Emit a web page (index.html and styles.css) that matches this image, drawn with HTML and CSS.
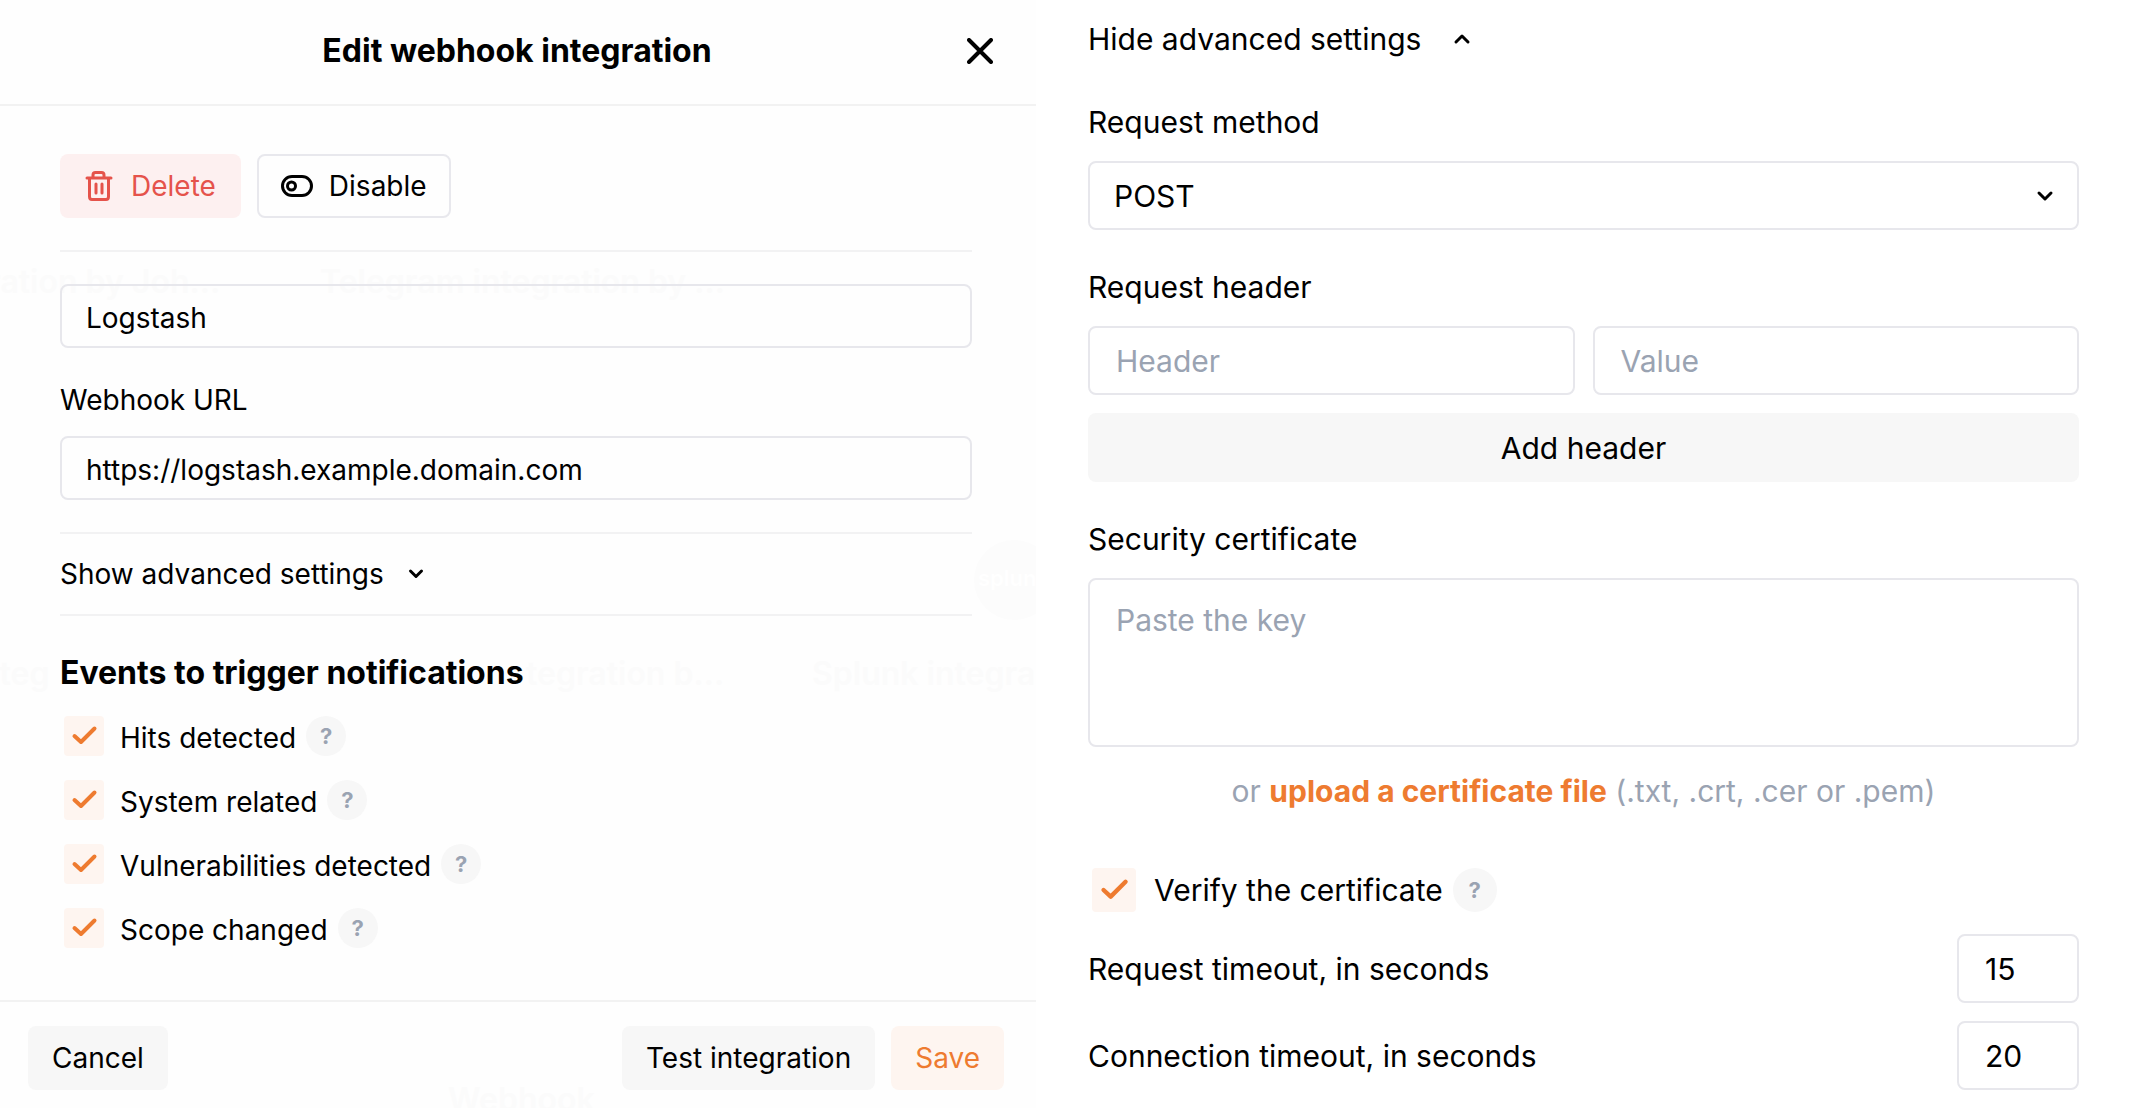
FILE: index.html
```html
<!DOCTYPE html>
<html lang="en">
<head>
<meta charset="utf-8">
<meta name="viewport" content="width=device-width, initial-scale=1">
<title>Edit webhook integration</title>
<link rel="stylesheet" href="styles.css">
</head>
<body>
<main class="page">
  <section class="dialog" aria-labelledby="dialog-title">
    <div class="backdrop" aria-hidden="true">
      <span class="ghost ghost-john">ration by Joh...</span>
      <span class="ghost ghost-telegram">Telegram integration by ...</span>
      <span class="ghost ghost-left">nteg</span>
      <span class="ghost ghost-mid">tegration b...</span>
      <span class="ghost ghost-splunk">Splunk integra</span>
      <span class="ghost ghost-webhook">Webhook</span>
      <span class="ghost-logo">splunk</span>
    </div>
    <header class="dialog-header">
      <h1 class="title" id="dialog-title">Edit webhook integration</h1>
      <button class="close" type="button" aria-label="Close">
        <svg width="26" height="26" viewBox="0 0 26 26"><path d="M2 2 24 24M24 2 2 24"/></svg>
      </button>
    </header>
    <form class="dialog-body" id="integration">
      <div class="actions">
        <button class="btn btn-danger" type="button">
          <svg width="28" height="32" viewBox="0 0 28 32"><path d="M2 8H26M8 8V5Q8 2.500 10.500 2.500H16.500Q19 2.500 19 5V8M4.500 8V26.500Q4.500 29.500 7 29.500H21Q23.500 29.500 23.500 26.500V8M11 14V23M17 14V23"/></svg>
          Delete
        </button>
        <button class="btn btn-outline" type="button">
          <svg width="32" height="24" viewBox="0 0 32 24"><rect x="1.500" y="2.500" width="29" height="19" rx="9.500"/><circle cx="10.500" cy="12" r="4"/></svg>
          Disable
        </button>
      </div>
      <hr class="rule">
      <input class="field" type="text" value="Logstash" aria-label="Integration name">
      <label class="label" for="url">Webhook URL</label>
      <input class="field" id="url" type="text" value="https://logstash.example.domain.com">
      <hr class="rule">
      <button class="toggle" type="button" aria-expanded="false">
        Show advanced settings
        <svg class="chevron" width="16" height="12" viewBox="0 0 16 12"><path d="M2.500 3 8 8.500 13.500 3"/></svg>
      </button>
      <hr class="rule rule-tight">
      <h2 class="subtitle">Events to trigger notifications</h2>
      <ul class="events">
        <li class="check-row">
          <label class="check"><span class="box"><input type="checkbox" checked><svg viewBox="0 0 40 40"><path d="M10.500 20 17 26 30.500 12.500"/></svg></span><span class="check-text">Hits detected</span></label>
          <button class="help" type="button">?</button>
        </li>
        <li class="check-row">
          <label class="check"><span class="box"><input type="checkbox" checked><svg viewBox="0 0 40 40"><path d="M10.500 20 17 26 30.500 12.500"/></svg></span><span class="check-text">System related</span></label>
          <button class="help" type="button">?</button>
        </li>
        <li class="check-row">
          <label class="check"><span class="box"><input type="checkbox" checked><svg viewBox="0 0 40 40"><path d="M10.500 20 17 26 30.500 12.500"/></svg></span><span class="check-text">Vulnerabilities detected</span></label>
          <button class="help" type="button">?</button>
        </li>
        <li class="check-row">
          <label class="check"><span class="box"><input type="checkbox" checked><svg viewBox="0 0 40 40"><path d="M10.500 20 17 26 30.500 12.500"/></svg></span><span class="check-text">Scope changed</span></label>
          <button class="help" type="button">?</button>
        </li>
      </ul>
    </form>
    <footer class="dialog-footer">
      <button class="btn btn-muted" type="button">Cancel</button>
      <button class="btn btn-muted btn-test" type="button">Test integration</button>
      <button class="btn btn-save" type="submit" form="integration">Save</button>
    </footer>
  </section>

  <form class="advanced">
    <button class="toggle" type="button" aria-expanded="true">
      Hide advanced settings
      <svg class="chevron" width="18" height="12" viewBox="0 0 18 12"><path d="M3 9 9 3 15 9"/></svg>
    </button>
    <label class="label" for="method">Request method</label>
    <div class="select">
      <select class="field" id="method"><option>POST</option><option>PUT</option></select>
      <svg class="chevron" width="18" height="12" viewBox="0 0 18 12"><path d="M3 3 9 9 15 3"/></svg>
    </div>
    <label class="label" for="header">Request header</label>
    <div class="pair">
      <input class="field" id="header" type="text" placeholder="Header">
      <input class="field" type="text" placeholder="Value" aria-label="Header value">
    </div>
    <button class="btn btn-muted btn-wide" type="button">Add header</button>
    <label class="label" for="cert">Security certificate</label>
    <textarea class="field area" id="cert" placeholder="Paste the key"></textarea>
    <p class="upload">or <a class="link" href="#">upload a certificate file</a> (.txt, .crt, .cer or .pem)</p>
    <div class="check-row verify">
      <label class="check"><span class="box"><input type="checkbox" checked><svg viewBox="0 0 40 40"><path d="M10.500 20 17 26 30.500 12.500"/></svg></span>Verify the certificate</label>
      <button class="help" type="button">?</button>
    </div>
    <div class="timeout">
      <label for="request-timeout">Request timeout, in seconds</label>
      <input class="field" id="request-timeout" type="text" value="15">
    </div>
    <div class="timeout">
      <label for="connection-timeout">Connection timeout, in seconds</label>
      <input class="field" id="connection-timeout" type="text" value="20">
    </div>
  </form>
</main>
</body>
</html>
```
FILE: styles.css
```css
* { box-sizing: border-box; }

body {
  margin: 0;
  background: #fff;
  color: #000;
  font: 400 28px/40px Inter, "Liberation Sans", sans-serif;
}

h1, h2, p, ul { margin: 0; padding: 0; }
ul { list-style: none; }
button, input, select, textarea { margin: 0; font: inherit; color: inherit; }
button { border: 0; padding: 0; background: none; cursor: pointer; }
svg { display: block; flex: none; fill: none; stroke: currentColor; stroke-width: 3; stroke-linecap: round; stroke-linejoin: round; }

.page {
  display: grid;
  grid-template-columns: 1036fr 1106fr;
  min-height: 100vh;
}

/* Dialog */
.dialog {
  position: relative;
  display: flex;
  flex-direction: column;
  background: #fefefe;
  overflow: hidden;
}
.dialog > :not(.backdrop) { position: relative; }

.dialog-header {
  display: grid;
  grid-template-columns: 60px 1fr 60px;
  align-items: center;
  padding: 31px 26px 33px 24px;
  border-bottom: 2px solid #f2f2f2;
}
.title { grid-column: 2; font-size: 32px; font-weight: 700; text-align: center; }
.close { display: grid; place-items: center; height: 40px; }
.close svg { stroke-width: 4; }

.dialog-body {
  display: flex;
  flex-direction: column;
  flex: 1;
  padding: 48px 64px 40px 60px;
}
.actions { display: flex; gap: 16px; }

.btn {
  display: flex;
  align-items: center;
  justify-content: center;
  height: 64px;
  padding: 0 24px;
  border-radius: 8px;
}
.btn-danger { gap: 18px; padding: 0 25px; background: #fdf0f0; color: #e5534b; }
.btn-outline { gap: 16px; padding: 0 22px; border: 2px solid #e8e8ed; }
.btn-muted { background: #f7f7f7; }
.btn-save { background: #fef5f0; color: #ee7b30; }

.rule { width: 100%; margin: 32px 0; border: 0; border-top: 2px solid #f2f2f3; }
.rule-tight { margin: 0 0 37px; }

.field {
  width: 100%;
  height: 64px;
  padding: 3px 24px 0;
  border: 2px solid #e7e7ec;
  border-radius: 8px;
  background: transparent;
  outline: 0;
}
.field::placeholder { color: #9aa3b2; opacity: 1; }
.dialog .label { margin: 32px 0 16px; }

.toggle { display: flex; align-items: center; gap: 24px; }
.dialog .toggle { margin: -12px 0 20px; }

.subtitle { font-size: 32px; font-weight: 700; }
.events { display: grid; gap: 24px; padding: 23px 4px 0; }

.check-row { display: flex; align-items: center; gap: 10px; }
.check { display: flex; align-items: center; gap: 16px; }
.check-text { padding-top: 4px; line-height: 36px; }
.box { display: grid; width: 40px; height: 40px; }
.box > * { grid-area: 1 / 1; width: 100%; height: 100%; }
.box input { margin: 0; appearance: none; border-radius: 4px; background: #fef5f0; }
.box svg { color: #ee7b30; stroke-width: 4; pointer-events: none; }
.help {
  width: 40px;
  height: 40px;
  border-radius: 50%;
  background: #f7f7f7;
  color: #9aa3b2;
  font-size: 22px;
  font-weight: 700;
}

.dialog-footer {
  display: flex;
  gap: 16px;
  padding: 24px 32px 18px 28px;
  border-top: 2px solid #f2f2f2;
}
.btn-test { margin-left: auto; }

/* Integration cards showing faintly through the dialog */
.backdrop { position: absolute; inset: 0; color: #fbfbfb; font-size: 32px; font-weight: 600; white-space: nowrap; }
.ghost, .ghost-logo { position: absolute; }
.ghost-john { left: -12px; top: 262px; }
.ghost-telegram { left: 320px; top: 262px; }
.ghost-left { left: -20px; top: 654px; }
.ghost-mid { left: 526px; top: 654px; }
.ghost-splunk { left: 812px; top: 654px; }
.ghost-webhook { left: 448px; top: 1080px; }
.ghost-logo {
  left: 974px;
  top: 540px;
  width: 80px;
  height: 80px;
  padding-left: 4px;
  border-radius: 50%;
  background: #fcfcfc;
  color: #fff;
  font-size: 22px;
  line-height: 76px;
}

/* Advanced settings */
.advanced {
  display: flex;
  flex-direction: column;
  padding: 19px 63px 17px 52px;
  font-size: 30px;
}
.advanced .label { margin: 37px 0 19px; }
.advanced .field, .btn-wide { height: 69px; }
.advanced .field { padding: 0 26px; }
.advanced .toggle { gap: 32px; margin-bottom: 6px; }
.select { display: grid; align-items: center; }
.select > * { grid-area: 1 / 1; }
.advanced .select .field { appearance: none; padding: 0 24px; }
.select .chevron { justify-self: end; margin-right: 25px; pointer-events: none; }
.pair { display: grid; grid-template-columns: 1fr 1fr; gap: 18px; margin-bottom: 18px; }
.advanced .area { height: 169px; padding: 20px 26px; resize: none; }
.upload { margin: 24px 0 57px; color: #9aa3b2; text-align: center; }
.link { color: #ee7b30; font-weight: 700; text-decoration: none; }
.verify { padding-left: 4px; margin-bottom: 22px; }
.advanced .check { gap: 18px; }
.advanced .box, .advanced .help { width: 44px; height: 44px; }
.timeout { display: flex; align-items: center; justify-content: space-between; }
.timeout + .timeout { margin-top: 18px; }
.timeout .field { width: 122px; }
```
